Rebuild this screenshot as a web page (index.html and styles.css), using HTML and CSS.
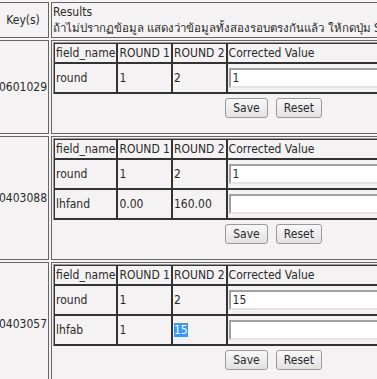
FILE: index.html
```html
<!DOCTYPE html>
<html>

<head>
    <title>Compare Rounds</title>
    <link rel="stylesheet" href="styles.css">
</head>

<body>
    <table class="main">
        <tr>
            <th class="key">Key(s)</th>
            <td class="res">Results<br><span class="note">ถ้าไม่ปรากฏข้อมูล แสดงว่าข้อมูลทั้งสองรอบตรงกันแล้ว ให้กดปุ่ม Save</span></td>
        </tr>
        <tr>
            <td class="key">0601029</td>
            <td class="res">
                <table class="diff">
                    <tr>
                        <th>field_name</th>
                        <th>ROUND 1</th>
                        <th>ROUND 2</th>
                        <th class="fix">Corrected Value</th>
                    </tr>
                    <tr>
                        <td>round</td>
                        <td>1</td>
                        <td>2</td>
                        <td><input type="text" value="1"></td>
                    </tr>
                </table>
                <div class="actions">
                    <button>Save</button>
                    <button>Reset</button>
                </div>
            </td>
        </tr>
        <tr>
            <td class="key">0403088</td>
            <td class="res">
                <table class="diff">
                    <tr>
                        <th>field_name</th>
                        <th>ROUND 1</th>
                        <th>ROUND 2</th>
                        <th class="fix">Corrected Value</th>
                    </tr>
                    <tr>
                        <td>round</td>
                        <td>1</td>
                        <td>2</td>
                        <td><input type="text" value="1"></td>
                    </tr>
                    <tr>
                        <td>lhfand</td>
                        <td>0.00</td>
                        <td>160.00</td>
                        <td><input type="text" value=""></td>
                    </tr>
                </table>
                <div class="actions">
                    <button>Save</button>
                    <button>Reset</button>
                </div>
            </td>
        </tr>
        <tr>
            <td class="key">0403057</td>
            <td class="res">
                <table class="diff">
                    <tr>
                        <th>field_name</th>
                        <th>ROUND 1</th>
                        <th>ROUND 2</th>
                        <th class="fix">Corrected Value</th>
                    </tr>
                    <tr>
                        <td>round</td>
                        <td>1</td>
                        <td>2</td>
                        <td><input type="text" value="15"></td>
                    </tr>
                    <tr>
                        <td>lhfab</td>
                        <td>1</td>
                        <td><span class="sel">15</span></td>
                        <td><input type="text" value=""></td>
                    </tr>
                </table>
                <div class="actions">
                    <button>Save</button>
                    <button>Reset</button>
                </div>
            </td>
        </tr>
    </table>
</body>

</html>
```

FILE: styles.css
```css
body {
    margin: 0;
    background-color: #f4f2f2;
    color: #2a2a2a;
    font-family: "DejaVu Sans Condensed", "DejaVu Sans", "Noto Sans", sans-serif;
    font-stretch: condensed;
    font-size: 12px;
    line-height: 16px;
    overflow: hidden;
}

.main {
    margin-left: -5px;
    border-collapse: separate;
    border-spacing: 2px;
}

.main > tbody > tr > td,
.main > tbody > tr > th {
    border: 1px solid #666;
    padding: 1px;
}

.main th {
    font-weight: normal;
}

.key {
    vertical-align: middle;
    text-align: center;
}

.res {
    text-align: left;
    vertical-align: top;
    width: 441px;
}

.note {
    font-size: 11.5px;
    white-space: nowrap;
}

.diff {
    width: 441px;
    border-collapse: separate;
    border-spacing: 0;
    border: 1px solid;
    border-color: #999 #333 #333 #999;
}

.diff th,
.diff td {
    border: 1px solid #333;
    padding: 1px;
    text-align: left;
    font-weight: normal;
    white-space: nowrap;
}

.diff .fix {
    width: 100%;
}

.diff input {
    box-sizing: border-box;
    width: 100%;
    height: 20px;
    margin: 3px 0;
    padding: 0 2px;
    border: 2px solid;
    border-color: #a0a0a0 #e4e4e4 #e4e4e4 #a0a0a0;
    background-color: #fff;
    font: inherit;
    color: #2a2a2a;
}

.sel {
    background-color: #3399ff;
    color: #fff;
}

.actions {
    display: flex;
    justify-content: center;
    gap: 8px;
    padding: 4px 0 14px;
}

.actions button {
    height: 20px;
    padding: 0 7px;
    border: 1px solid #999;
    border-radius: 3px;
    background: linear-gradient(#f8f8f8, #e2e2e2);
    font: inherit;
    color: #2a2a2a;
}
```
